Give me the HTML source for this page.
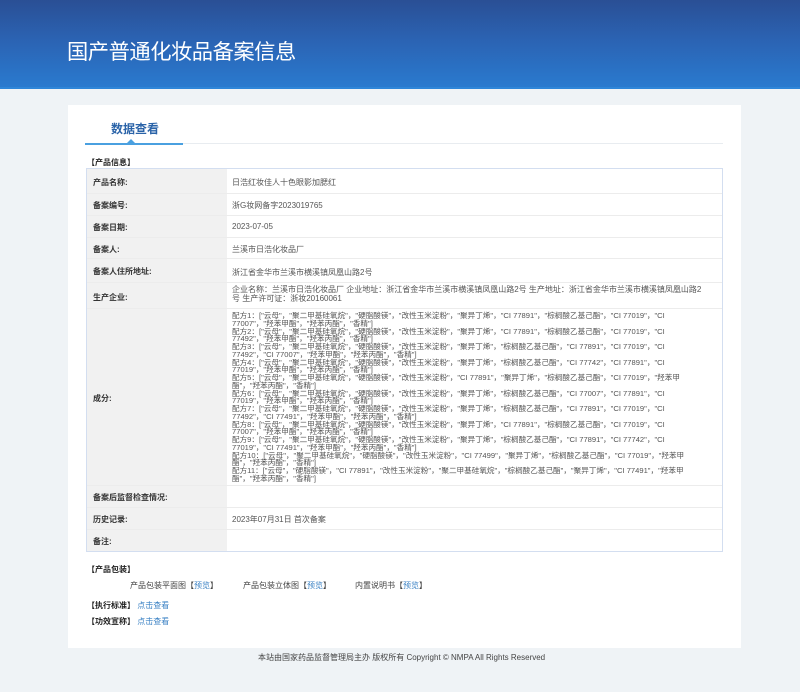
<!DOCTYPE html>
<html><head><meta charset="utf-8"><style>
*{margin:0;padding:0;box-sizing:border-box}
body{width:800px;height:692px;background:#eff3f6;font-family:"Liberation Sans","Noto Sans CJK SC",sans-serif;position:relative;overflow:hidden;color:#333}
.hd{position:absolute;left:0;top:0;width:800px;height:89px;background:linear-gradient(180deg,#2a4f95 0%,#2b63b3 45%,#2a7bd0 100%)}
.hd:after{content:"";position:absolute;left:0;bottom:0;width:800px;height:2px;background:#2e86d9}
.hd h1{position:absolute;left:67px;top:35px;font-size:21.3px;font-weight:normal;color:#fff;letter-spacing:-0.5px}
.panel{position:absolute;left:68px;top:105px;width:673px;height:543px;background:#fff}
.tab{position:absolute;left:111px;top:120px;font-size:12px;font-weight:bold;color:#2a63a8}
.tl{position:absolute;left:85px;top:143px;width:638px;height:1px;background:#e8ecf0}
.tl2{position:absolute;left:85px;top:143px;width:98px;height:2px;background:#4aa0e0}
.tri{position:absolute;left:127px;top:139px;width:0;height:0;border-left:4px solid transparent;border-right:4px solid transparent;border-bottom:4px solid #4aa0e0}
.sec{position:absolute;left:87px;font-size:8px;font-weight:bold;color:#222}
.tbl{position:absolute;left:86px;top:168px;width:637px;height:384px;border:1px solid #d3def0;background:#fff}
.lab{position:absolute;left:0;top:0;width:140px;height:382px;background:#f1f1f1}
.row{position:absolute;left:0;width:635px;border-bottom:1px solid #ececec}
.row .k{position:absolute;left:6px;font-size:8px;font-weight:bold;color:#333}
.row .v{position:absolute;left:145px;font-size:8px;color:#555}
.ing{position:absolute;left:145px;top:3px;width:465px;font-size:7.6px;line-height:7.75px;color:#555}
.lnk{color:#3b82c4}
.t{position:absolute;font-size:8px;color:#444}
.ft{position:absolute;left:258px;top:652px;font-size:8px;color:#444}
</style></head><body>
<div class="hd"><h1>国产普通化妆品备案信息</h1></div>
<div class="panel"></div>
<div class="tab">数据查看</div>
<div class="tl"></div><div class="tl2"></div><div class="tri"></div>
<div class="sec" style="top:157px">【产品信息】</div>
<div class="tbl"><div class="lab"></div>
<div class="row" style="top:0;height:25px"><span class="k" style="top:8px">产品名称:</span><span class="v" style="top:8px">日浩红妆佳人十色眼影加腮红</span></div>
<div class="row" style="top:25px;height:22px"><span class="k" style="top:6px">备案编号:</span><span class="v" style="top:6px">浙G妆网备字2023019765</span></div>
<div class="row" style="top:47px;height:22px"><span class="k" style="top:6px">备案日期:</span><span class="v" style="top:6px">2023-07-05</span></div>
<div class="row" style="top:69px;height:21px"><span class="k" style="top:6px">备案人:</span><span class="v" style="top:6px">兰溪市日浩化妆品厂</span></div>
<div class="row" style="top:90px;height:24px"><span class="k" style="top:7px">备案人住所地址:</span><span class="v" style="top:8px">浙江省金华市兰溪市横溪镇凤凰山路2号</span></div>
<div class="row" style="top:114px;height:26px"><span class="k" style="top:9px">生产企业:</span><span class="v" style="top:3px;width:470px;line-height:8.5px">企业名称：兰溪市日浩化妆品厂 企业地址：浙江省金华市兰溪市横溪镇凤凰山路2号 生产地址：浙江省金华市兰溪市横溪镇凤凰山路2号 生产许可证：浙妆20160061</span></div>
<div class="row" style="top:140px;height:177px"><span class="k" style="top:84px">成分:</span><div class="ing">配方1：["云母"，"聚二甲基硅氧烷"，"硬脂酸镁"，"改性玉米淀粉"，"聚异丁烯"，"CI 77891"，"棕榈酸乙基己酯"，"CI 77019"，"CI 77007"，"羟苯甲酯"，"羟苯丙酯"，"香精"]<br>配方2：["云母"，"聚二甲基硅氧烷"，"硬脂酸镁"，"改性玉米淀粉"，"聚异丁烯"，"CI 77891"，"棕榈酸乙基己酯"，"CI 77019"，"CI 77492"，"羟苯甲酯"，"羟苯丙酯"，"香精"]<br>配方3：["云母"，"聚二甲基硅氧烷"，"硬脂酸镁"，"改性玉米淀粉"，"聚异丁烯"，"棕榈酸乙基己酯"，"CI 77891"，"CI 77019"，"CI 77492"，"CI 77007"，"羟苯甲酯"，"羟苯丙酯"，"香精"]<br>配方4：["云母"，"聚二甲基硅氧烷"，"硬脂酸镁"，"改性玉米淀粉"，"聚异丁烯"，"棕榈酸乙基己酯"，"CI 77742"，"CI 77891"，"CI 77019"，"羟苯甲酯"，"羟苯丙酯"，"香精"]<br>配方5：["云母"，"聚二甲基硅氧烷"，"硬脂酸镁"，"改性玉米淀粉"，"CI 77891"，"聚异丁烯"，"棕榈酸乙基己酯"，"CI 77019"，"羟苯甲酯"，"羟苯丙酯"，"香精"]<br>配方6：["云母"，"聚二甲基硅氧烷"，"硬脂酸镁"，"改性玉米淀粉"，"聚异丁烯"，"棕榈酸乙基己酯"，"CI 77007"，"CI 77891"，"CI 77019"，"羟苯甲酯"，"羟苯丙酯"，"香精"]<br>配方7：["云母"，"聚二甲基硅氧烷"，"硬脂酸镁"，"改性玉米淀粉"，"聚异丁烯"，"棕榈酸乙基己酯"，"CI 77891"，"CI 77019"，"CI 77492"，"CI 77491"，"羟苯甲酯"，"羟苯丙酯"，"香精"]<br>配方8：["云母"，"聚二甲基硅氧烷"，"硬脂酸镁"，"改性玉米淀粉"，"聚异丁烯"，"CI 77891"，"棕榈酸乙基己酯"，"CI 77019"，"CI 77007"，"羟苯甲酯"，"羟苯丙酯"，"香精"]<br>配方9：["云母"，"聚二甲基硅氧烷"，"硬脂酸镁"，"改性玉米淀粉"，"聚异丁烯"，"棕榈酸乙基己酯"，"CI 77891"，"CI 77742"，"CI 77019"，"CI 77491"，"羟苯甲酯"，"羟苯丙酯"，"香精"]<br>配方10：["云母"，"聚二甲基硅氧烷"，"硬脂酸镁"，"改性玉米淀粉"，"CI 77499"，"聚异丁烯"，"棕榈酸乙基己酯"，"CI 77019"，"羟苯甲酯"，"羟苯丙酯"，"香精"]<br>配方11：["云母"，"硬脂酸镁"，"CI 77891"，"改性玉米淀粉"，"聚二甲基硅氧烷"，"棕榈酸乙基己酯"，"聚异丁烯"，"CI 77491"，"羟苯甲酯"，"羟苯丙酯"，"香精"]</div></div>
<div class="row" style="top:317px;height:22px"><span class="k" style="top:6px">备案后监督检查情况:</span></div>
<div class="row" style="top:339px;height:22px"><span class="k" style="top:6px">历史记录:</span><span class="v" style="top:6px">2023年07月31日 首次备案</span></div>
<div class="row" style="top:361px;height:21px;border:none"><span class="k" style="top:6px">备注:</span></div>
</div>
<div class="sec" style="top:564px">【产品包装】</div>
<div class="t" style="left:130px;top:580px">产品包装平面图【<span class="lnk">预览</span>】</div>
<div class="t" style="left:243px;top:580px">产品包装立体图【<span class="lnk">预览</span>】</div>
<div class="t" style="left:355px;top:580px">内置说明书【<span class="lnk">预览</span>】</div>
<div class="sec" style="top:600px">【执行标准】 <span class="lnk" style="font-weight:normal">点击查看</span></div>
<div class="sec" style="top:616px">【功效宣称】 <span class="lnk" style="font-weight:normal">点击查看</span></div>
<div class="ft">本站由国家药品监督管理局主办 版权所有 Copyright © NMPA All Rights Reserved</div>
</body></html>
